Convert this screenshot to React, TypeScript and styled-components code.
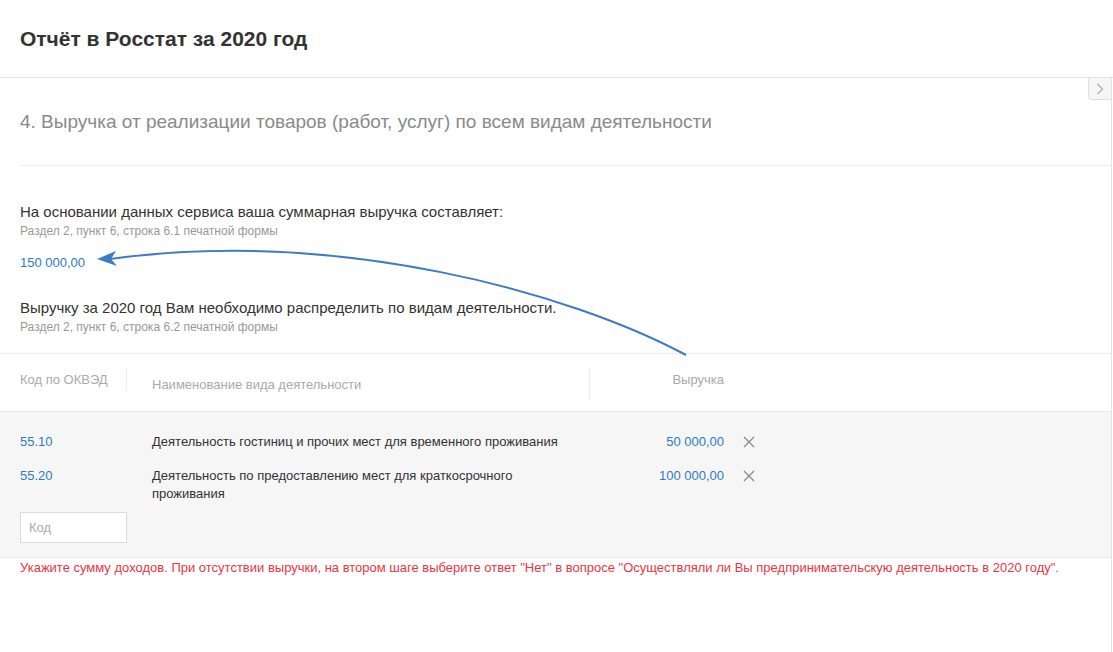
import styled, { createGlobalStyle } from "styled-components";

const GlobalStyle = createGlobalStyle`
  body {
    margin: 0;
    background: #fff;
    font-family: "Liberation Sans", Arial, sans-serif;
    color: #333;
  }
`;

const Page = styled.div`
  width: 1113px;
  min-height: 652px;
`;

const Header = styled.header`
  height: 77px;
  display: flex;
  align-items: center;
  padding-left: 20px;
  border-bottom: 1px solid #e3e3e3;
`;

const Title = styled.h1`
  margin: 0;
  font-size: 21px;
  font-weight: 700;
  color: #333;
`;

const Main = styled.main`
  position: relative;
  width: 1111px;
  min-height: 574px;
  border-right: 1px solid #e3e3e3;
`;

const ToggleButton = styled.button`
  position: absolute;
  top: 0;
  right: 0;
  width: 23px;
  height: 22px;
  padding: 0;
  display: flex;
  align-items: center;
  justify-content: center;
  background: #f6f6f6;
  border: 1px solid #dedede;
  border-top: none;
  border-right: none;
  border-radius: 0 0 0 4px;
`;

const SectionHead = styled.div`
  margin-left: 20px;
  padding: 33px 0 32px;
  border-bottom: 1px solid #ebebeb;
`;

const SectionTitle = styled.h2`
  margin: 0;
  font-size: 19px;
  line-height: 22px;
  font-weight: 400;
  color: #8a8a8a;
`;

const Intro = styled.div`
  padding: 37px 20px 18px;
`;

const Lead = styled.p<{ $gap?: number }>`
  margin: ${(p) => p.$gap ?? 0}px 0 0;
  font-size: 15px;
  line-height: 18px;
  color: #333;
`;

const Hint = styled.div`
  margin-top: 2px;
  font-size: 12px;
  line-height: 16px;
  color: #999;
`;

const Total = styled.div`
  margin-top: 15px;
  font-size: 13px;
  line-height: 18px;
  color: #2a7bc6;
`;

const Table = styled.div`
  border-top: 1px solid #ebebeb;
`;

const HeadRow = styled.div`
  display: flex;
  align-items: flex-start;
  height: 43px;
  padding-top: 14px;
`;

const HeadCell = styled.div<{ $width: number; $height: number; $sep?: boolean; $right?: boolean }>`
  box-sizing: border-box;
  width: ${(p) => p.$width}px;
  height: ${(p) => p.$height}px;
  display: flex;
  align-items: center;
  justify-content: ${(p) => (p.$right ? "flex-end" : "flex-start")};
  padding-left: ${(p) => (p.$right ? 0 : 20)}px;
  border-right: ${(p) => (p.$sep ? "1px solid #ececec" : "none")};
  font-size: 13px;
  color: #aaa;
`;

const HeadName = styled(HeadCell)`
  padding-left: 25px;
`;

const Body = styled.div`
  background: #f6f6f6;
  border-top: 1px solid #e9e9e9;
  border-bottom: 1px solid #e9e9e9;
  padding: 21px 0 14px 20px;
`;

const Row = styled.div`
  display: grid;
  grid-template-columns: 132px 437px 135px 40px;
  margin-bottom: 16px;
  font-size: 13px;
  line-height: 18px;
`;

const Code = styled.div`
  color: #2a7bc6;
`;

const Name = styled.div`
  color: #333;
  padding-right: 20px;
`;

const Amount = styled.div`
  color: #2a7bc6;
  text-align: right;
`;

const Remove = styled.button`
  margin-left: 17px;
  width: 16px;
  height: 18px;
  padding: 0;
  border: none;
  background: none;
  display: flex;
  align-items: center;
  justify-content: center;
`;

const CodeInput = styled.input`
  display: block;
  box-sizing: border-box;
  margin-top: -7px;
  width: 107px;
  height: 31px;
  padding: 0 8px;
  border: 1px solid #dcdcdc;
  background: #fff;
  font-family: inherit;
  font-size: 13px;
  color: #333;
  outline: none;

  &::placeholder {
    color: #aaa;
  }
`;

const ErrorText = styled.p`
  margin: 0;
  padding: 2px 20px 0;
  font-size: 13px;
  line-height: 16px;
  color: #ee3540;
`;

const ArrowLayer = styled.svg`
  position: absolute;
  left: 0;
  top: 0;
  pointer-events: none;
  overflow: visible;
`;

const rows = [
  { code: "55.10", name: "Деятельность гостиниц и прочих мест для временного проживания", amount: "50 000,00" },
  { code: "55.20", name: "Деятельность по предоставлению мест для краткосрочного проживания", amount: "100 000,00" },
];

const Cross = () => (
  <svg width="12" height="12" viewBox="0 0 12 12">
    <path d="M1 1L11 11M11 1L1 11" stroke="#8d8d8d" strokeWidth="1.4" />
  </svg>
);

export default function App() {
  return (
    <Page>
      <GlobalStyle />
      <Header>
        <Title>Отчёт в Росстат за 2020 год</Title>
      </Header>
      <Main>
        <ToggleButton aria-label="Развернуть">
          <svg width="8" height="12" viewBox="0 0 8 12">
            <path d="M1.5 1L6.5 6L1.5 11" fill="none" stroke="#aaa" strokeWidth="1.2" />
          </svg>
        </ToggleButton>
        <SectionHead>
          <SectionTitle>4. Выручка от реализации товаров (работ, услуг) по всем видам деятельности</SectionTitle>
        </SectionHead>
        <Intro>
          <Lead>На основании данных сервиса ваша суммарная выручка составляет:</Lead>
          <Hint>Раздел 2, пункт 6, строка 6.1 печатной формы</Hint>
          <Total>150 000,00</Total>
          <Lead $gap={27}>Выручку за 2020 год Вам необходимо распределить по видам деятельности.</Lead>
          <Hint>Раздел 2, пункт 6, строка 6.2 печатной формы</Hint>
        </Intro>
        <Table>
          <HeadRow>
            <HeadCell $width={127} $height={22} $sep>Код по ОКВЭД</HeadCell>
            <HeadName $width={463} $height={33} $sep>Наименование вида деятельности</HeadName>
            <HeadCell $width={134} $height={22} $right>Выручка</HeadCell>
          </HeadRow>
          <Body>
            {rows.map((r) => (
              <Row key={r.code}>
                <Code>{r.code}</Code>
                <Name>{r.name}</Name>
                <Amount>{r.amount}</Amount>
                <Remove aria-label="Удалить">
                  <Cross />
                </Remove>
              </Row>
            ))}
            <CodeInput placeholder="Код" />
          </Body>
        </Table>
        <ErrorText>
          Укажите сумму доходов. При отсутствии выручки, на втором шаге выберите ответ "Нет" в вопросе "Осуществляли ли Вы предпринимательскую деятельность в 2020 году".
        </ErrorText>
        <ArrowLayer width="1111" height="300">
          <path d="M686 277 C 570 215 340 150 110 181" fill="none" stroke="#3b7cc4" strokeWidth="2" />
          <path d="M97 181 L116 173 L111 181 L117 188 Z" fill="#3b7cc4" />
        </ArrowLayer>
      </Main>
    </Page>
  );
}
